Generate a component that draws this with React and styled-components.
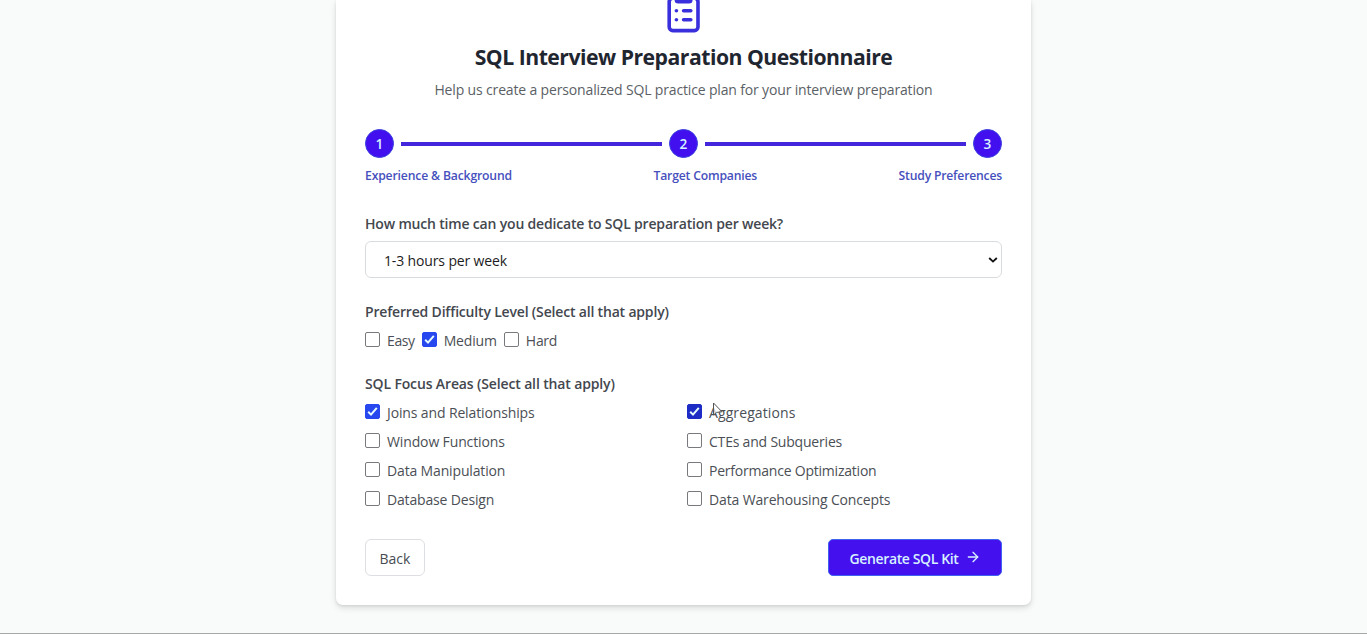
import React from "react";
import styled, { createGlobalStyle } from "styled-components";
import { ArrowRight, ClipboardList } from "lucide-react";

const GlobalStyle = createGlobalStyle`
  * { box-sizing: border-box; }
  body {
    margin: 0;
    overflow: hidden;
    font-family: "Open Sans", "Noto Sans", sans-serif;
    background: #f9fbfb;
  }
`;

const Page = styled.main`
  height: 634px;
  display: flex;
  flex-direction: column;
  align-items: center;
  justify-content: space-between;
  background: #f9fbfb;
  border-bottom: 1px solid #a6a8a8;
  overflow: hidden;
`;

const Card = styled.section`
  width: 695px;
  height: 605px;
  padding: 0 29px;
  display: flex;
  flex-direction: column;
  background: #fff;
  border-radius: 0 0 7px 7px;
  box-shadow: 0 3px 6px rgba(0, 0, 0, 0.12), 0 1px 3px rgba(0, 0, 0, 0.08);
`;

const Header = styled.header`
  display: flex;
  flex-direction: column;
  align-items: center;
  height: 129px;
  svg {
    flex: none;
    margin-top: -8.6px;
    color: #3a2fdc;
  }
`;

const Title = styled.h1`
  margin: 7.6px 0 0;
  font-size: 21.2px;
  line-height: 29px;
  font-weight: 700;
  color: #1f2630;
  white-space: nowrap;
  letter-spacing: -0.5px;
`;

const Subtitle = styled.p`
  margin: 8px 0 0;
  font-size: 14px;
  line-height: 22px;
  color: #5b5f66;
  white-space: nowrap;
  letter-spacing: -0.155px;
`;

const Steps = styled.div`
  display: flex;
  align-items: center;
  gap: 7px;
  height: 29px;
`;

const StepDot = styled.span`
  flex: none;
  width: 29px;
  height: 29px;
  border-radius: 50%;
  display: flex;
  align-items: center;
  justify-content: center;
  background: #4210ee;
  border: 1px solid #3a3fdf;
  color: #d8f4ff;
  font-size: 13.6px;
  line-height: 19px;
  font-weight: 600;
`;

const StepLine = styled.span`
  flex: 1;
  height: 4px;
  background: #4427dc;
`;

const StepLabels = styled.div`
  display: flex;
  justify-content: space-between;
  margin-top: 8px;
  height: 19px;
`;

const StepLabel = styled.span`
  font-size: 12.2px;
  line-height: 19px;
  font-weight: 600;
  color: #4650bd;
  white-space: nowrap;
  letter-spacing: ${(p) => p.$ls || 0}px;
`;

const Field = styled.div`
  display: flex;
  flex-direction: column;
  margin-top: ${(p) => p.$mt}px;
`;

const FieldLabel = styled.span`
  font-size: 14px;
  line-height: 22px;
  font-weight: 600;
  color: #43474e;
  white-space: nowrap;
  letter-spacing: ${(p) => p.$ls || 0}px;
`;

const SelectBox = styled.div`
  display: flex;
  align-items: center;
  justify-content: space-between;
  height: 37px;
  margin-top: 6px;
  padding: 2px 3px 0 18px;
  border: 1px solid #d9dcdf;
  border-radius: 6px;
  font-size: 14px;
  color: #1c1c1c;
  letter-spacing: -0.14px;
  svg {
    margin-top: -2px;
  }
`;

const CheckRow = styled.div`
  display: flex;
  gap: 7px;
  margin-top: 7px;
`;

const CheckGrid = styled.div`
  display: grid;
  grid-template-columns: 322px 1fr;
  grid-auto-rows: 29px;
  margin-top: 7px;
`;

const Option = styled.label`
  position: relative;
  display: flex;
  align-items: center;
  gap: 7px;
  height: 22px;
  font-size: 14px;
  line-height: 22px;
  color: #4b4f55;
  white-space: nowrap;
  letter-spacing: ${(p) => p.$ls || 0}px;
`;

const Box = styled.span`
  flex: none;
  width: 15px;
  height: 15px;
  margin-top: -3px;
  border-radius: 2px;
  display: flex;
  align-items: center;
  justify-content: center;
  border: 1px solid ${(p) => p.$fill || "#77797c"};
  background: ${(p) => p.$fill || "#fff"};
`;

const Cursor = styled.svg`
  position: absolute;
  left: 25px;
  top: 0;
`;

const Actions = styled.footer`
  display: flex;
  justify-content: space-between;
  margin-top: 21px;
`;

const BackButton = styled.button`
  width: 60px;
  height: 37px;
  padding: 1px 0 0;
  border: 1px solid #dcdee1;
  border-radius: 6px;
  background: #fff;
  color: #484c52;
  font: 400 14px "Open Sans", sans-serif;
`;

const SubmitButton = styled.button`
  width: 174px;
  height: 37px;
  padding: 1px 0 0 1px;
  display: flex;
  align-items: center;
  justify-content: center;
  gap: 7px;
  border: 1px solid #3f62f0;
  border-radius: 5px;
  background: #4510ee;
  color: #d6f1ff;
  font: 600 14px "Open Sans", sans-serif;
  letter-spacing: -0.38px;
  svg {
    margin-top: -2px;
  }
`;

function Check({ label, ls, fill, children }) {
  return (
    <Option $ls={ls}>
      <Box $fill={fill}>
        {fill && (
          <svg width="13" height="13" viewBox="0 0 13 13" fill="none" stroke="#e6fbff" strokeWidth="2">
            <path d="M2.2 6.8 5 9.6 10.8 2.8" />
          </svg>
        )}
      </Box>
      <span>{label}</span>
      {children}
    </Option>
  );
}

const BLUE = "#2748ee";

export default function App() {
  return (
    <>
      <GlobalStyle />
      <Page>
        <Card>
          <Header>
            <ClipboardList size={43.2} />
            <Title>SQL Interview Preparation Questionnaire</Title>
            <Subtitle>Help us create a personalized SQL practice plan for your interview preparation</Subtitle>
          </Header>
          <Steps>
            <StepDot>1</StepDot>
            <StepLine />
            <StepDot>2</StepDot>
            <StepLine />
            <StepDot>3</StepDot>
          </Steps>
          <StepLabels>
            <StepLabel $ls={-0.16}>Experience &amp; Background</StepLabel>
            <StepLabel $ls={-0.19}>Target Companies</StepLabel>
            <StepLabel $ls={-0.2}>Study Preferences</StepLabel>
          </StepLabels>
          <Field $mt={28}>
            <FieldLabel $ls={-0.18}>How much time can you dedicate to SQL preparation per week?</FieldLabel>
            <SelectBox>
              <span>1-3 hours per week</span>
              <svg width="10" height="8" viewBox="0 0 10 8" fill="none" stroke="#111" strokeWidth="1.8">
                <path d="M1.2 2 5 5.6 8.8 2" />
              </svg>
            </SelectBox>
          </Field>
          <Field $mt={23}>
            <FieldLabel $ls={-0.18}>Preferred Difficulty Level (Select all that apply)</FieldLabel>
            <CheckRow>
              <Check label="Easy" ls={-0.4} />
              <Check label="Medium" ls={-0.15} fill={BLUE} />
              <Check label="Hard" ls={-0.3} />
            </CheckRow>
          </Field>
          <Field $mt={21}>
            <FieldLabel $ls={-0.14}>SQL Focus Areas (Select all that apply)</FieldLabel>
            <CheckGrid>
              <Check label="Joins and Relationships" ls={-0.13} fill={BLUE} />
              <Check label="Aggregations" ls={0.1} fill="#1c2cc4">
                <Cursor width="12" height="17" viewBox="0 0 12 17" fill="#fff" fillOpacity="0.6" stroke="#555" strokeWidth="1">
                  <path d="M1.5 1v12l3-2.6 5.5-.6z" />
                </Cursor>
              </Check>
              <Check label="Window Functions" ls={-0.13} />
              <Check label="CTEs and Subqueries" ls={-0.2} />
              <Check label="Data Manipulation" ls={-0.15} />
              <Check label="Performance Optimization" ls={-0.22} />
              <Check label="Database Design" ls={-0.16} />
              <Check label="Data Warehousing Concepts" ls={-0.14} />
            </CheckGrid>
          </Field>
          <Actions>
            <BackButton>Back</BackButton>
            <SubmitButton>
              <span>Generate SQL Kit</span>
              <ArrowRight size={16} />
            </SubmitButton>
          </Actions>
        </Card>
      </Page>
    </>
  );
}
